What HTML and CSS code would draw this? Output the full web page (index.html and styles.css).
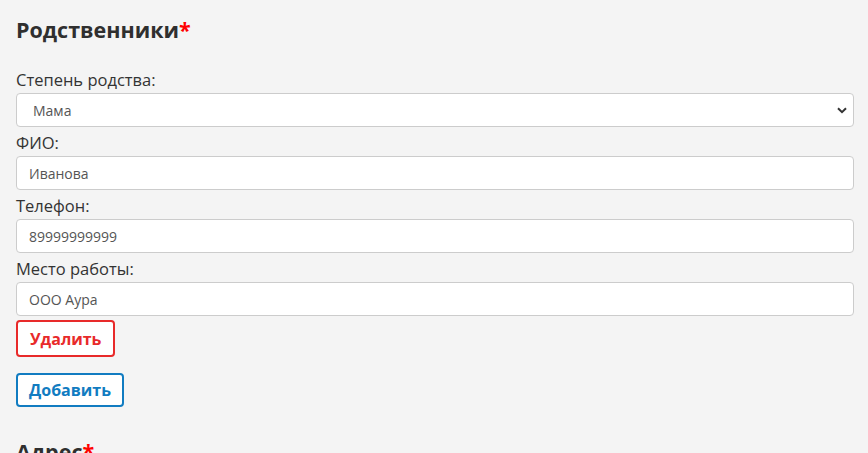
FILE: index.html
```html
<!DOCTYPE html>
<html lang="ru">
<head>
    <meta charset="UTF-8">
    <meta name="viewport" content="width=device-width, initial-scale=1.0">
    <title>Родственники</title>
    <link rel="stylesheet" href="styles.css">
</head>
<body>
    <div class="form">
        <h2 class="section-title">Родственники<span class="req">*</span></h2>

        <!-- Relative card -->
        <div class="relative">
            <label class="field-label" for="kind">Степень родства:</label>
            <div class="select-wrap">
                <select class="field" id="kind">
                    <option>Мама</option>
                    <option>Папа</option>
                </select>
                <svg class="chevron" width="10" height="7" viewBox="0 0 10 7">
                    <path d="M1 1.2 L5 5.2 L9 1.2" fill="none" stroke="#333" stroke-width="2"/>
                </svg>
            </div>

            <label class="field-label" for="fio">ФИО:</label>
            <input class="field" id="fio" type="text" value="Иванова">

            <label class="field-label" for="phone">Телефон:</label>
            <input class="field" id="phone" type="text" value="89999999999">

            <label class="field-label" for="work">Место работы:</label>
            <input class="field" id="work" type="text" value="ООО Аура">

            <button class="btn btn-remove">Удалить</button>
        </div>

        <button class="btn btn-add">Добавить</button>

        <h2 class="section-title address">Адрес<span class="req">*</span></h2>
    </div>
</body>
</html>
```

FILE: styles.css
```css
* {
    padding: 0px;
    margin: 0px;
    box-sizing: border-box;
}
body {
    background-color: #f4f4f4;
    font-family: "Open Sans", sans-serif;
    color: #333;
    overflow: hidden;
}
.form {
    padding: 0 14px 0 16px;
}
.section-title {
    font-size: 21.5px;
    font-weight: 700;
    color: #2f2f2f;
    line-height: 28px;
    padding-top: 16px;
    margin-bottom: 24px;
}
.section-title .req {
    color: #ff0000;
}
.section-title.address {
    padding-top: 31px;
}
/* FIELDS */
.field-label {
    display: block;
    font-size: 16.5px;
    line-height: 24px;
    color: #333;
    margin-bottom: 1px;
}
.field {
    display: block;
    width: 100%;
    height: 34px;
    background: #fff;
    border: 1px solid #ccc;
    border-radius: 4px;
    font-family: inherit;
    font-size: 14px;
    color: #555;
    padding: 0 12px;
    outline: none;
    margin-bottom: 4px;
}
.select-wrap {
    position: relative;
}
select.field {
    appearance: none;
    -webkit-appearance: none;
    padding-left: 16px;
}
.select-wrap .chevron {
    position: absolute;
    right: 7px;
    top: 14px;
    pointer-events: none;
}
/* BUTTONS */
.btn {
    display: block;
    background: #fff;
    font-family: inherit;
    font-size: 16px;
    font-weight: 700;
    border-radius: 4px;
    border: 2px solid;
    cursor: pointer;
}
.btn-remove {
    color: #e82a2a;
    border-color: #e82a2a;
    height: 37px;
    padding: 0 12px;
    margin-top: 1px;
    margin-bottom: 16px;
}
.btn-add {
    color: #117cc1;
    border-color: #117cc1;
    height: 34px;
    padding: 0 11px;
}
```
